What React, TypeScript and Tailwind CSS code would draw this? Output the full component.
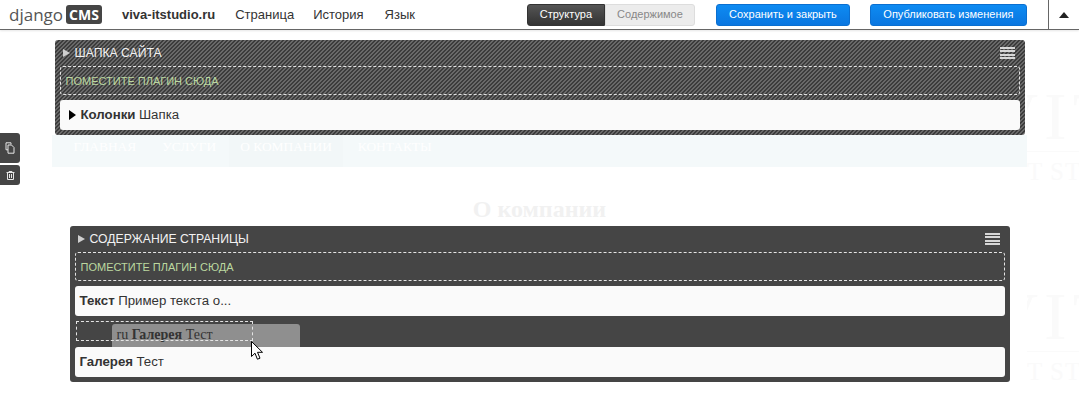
const stripes =
  'bg-[repeating-linear-gradient(135deg,#3c3c3c_0px,#3c3c3c_1.414px,#696969_1.414px,#696969_2.828px)]';

function MenuIcon({ className }: { className: string }) {
  return (
    <div className={`absolute flex h-[12px] w-[15px] flex-col justify-between ${className}`}>
      <span className="h-[2px] bg-[#d6d6d6]" />
      <span className="h-[2px] bg-[#d6d6d6]" />
      <span className="h-[2px] bg-[#d6d6d6]" />
      <span className="h-[2px] bg-[#d6d6d6]" />
    </div>
  );
}

function Header({ title }: { title: string }) {
  return (
    <div className="flex h-[26px] items-center pl-[3px] text-[12.2px] text-[#f2f2f2]">
      <span className="mr-[5px] h-0 w-0 border-y-[4px] border-l-[7px] border-y-transparent border-l-[#cfcfcf]" />
      {title}
    </div>
  );
}

function DropZone() {
  return (
    <div className="flex h-[29px] items-center rounded-[3px] border border-dashed border-[#e4e4e4] pl-[5px] pt-[2px] text-[11px] text-[#bcd9a0]">
      ПОМЕСТИТЕ ПЛАГИН СЮДА
    </div>
  );
}

function Plugin({ name, text, arrow }: { name: string; text: string; arrow?: boolean }) {
  return (
    <div className="flex h-[30px] items-center rounded-[3px] bg-[#fafafa] pl-[5px] text-[13.25px] text-[#333]">
      {arrow && (
        <span className="ml-[4px] mr-[5px] h-0 w-0 border-y-[5px] border-l-[7px] border-y-transparent border-l-black" />
      )}
      <b className="mr-[3.5px] font-bold">{name}</b>
      {text}
    </div>
  );
}

// faint logo of the page underneath, cut by the right edge of the window
function Watermark({ className }: { className: string }) {
  return (
    <div className={`absolute left-[1027px] w-[52px] overflow-hidden font-['Liberation_Serif',serif] leading-none text-[#fafafa] ${className}`}>
      <div className="-ml-[38px] whitespace-nowrap text-[68px] tracking-[6px]">VIT</div>
      <div className="mt-[1px] whitespace-nowrap border-t border-[#fafafa] pt-[7px] text-[25px] tracking-[1px]">T ST</div>
    </div>
  );
}

export default function App() {
  return (
    <div className="relative h-[401px] w-[1079px] overflow-hidden bg-white font-['Liberation_Sans',sans-serif]">
      {/* Toolbar */}
      <header className="flex h-[30px] items-center border-b border-[#666] bg-white text-[13px] text-[#333] shadow-[0_1px_2px_rgba(0,0,0,0.1)]">
        <div className="ml-[9px] flex items-center">
          <span className="font-['Open_Sans',sans-serif] text-[17px] text-[#555]">django</span>
          <span className="ml-[3px] flex h-[19px] w-[36px] items-center justify-center rounded-[3px] bg-[#454545] font-['Open_Sans',sans-serif] text-[14px] font-bold text-white">
            CMS
          </span>
        </div>
        <b className="ml-[20px] font-bold">viva-itstudio.ru</b>
        <span className="ml-[20px]">Страница</span>
        <span className="ml-[19px]">История</span>
        <span className="ml-[21px]">Язык</span>
        <div className="ml-[112px] flex h-[22px] text-[11px]">
          <span className="flex w-[78px] items-center justify-center rounded-l-[3px] border border-[#333] bg-gradient-to-b from-[#555] to-[#333] text-white">
            Структура
          </span>
          <span className="flex w-[90px] items-center justify-center rounded-r-[3px] border border-[#ddd] bg-[#ececec] text-[#888]">
            Содержимое
          </span>
        </div>
        <span className="ml-[21px] flex h-[22px] w-[134px] items-center justify-center rounded-[3px] border border-[#0b6fd0] bg-gradient-to-b from-[#0e8bf2] to-[#0a76e0] text-[11px] text-white">
          Сохранить и закрыть
        </span>
        <span className="ml-[20px] flex h-[22px] w-[157px] items-center justify-center rounded-[3px] border border-[#0b6fd0] bg-gradient-to-b from-[#0e8bf2] to-[#0a76e0] text-[11px] text-white">
          Опубликовать изменения
        </span>
        <div className="ml-[21px] flex h-[29px] flex-1 items-center border-l border-[#666] pl-[10px]">
          <span className="h-0 w-0 border-x-[5px] border-b-[6px] border-x-transparent border-b-[#222]" />
        </div>
      </header>

      {/* Background page watermarks */}
      <Watermark className="top-[82px]" />
      <Watermark className="top-[282px]" />

      {/* Side tools */}
      <div className="absolute left-0 top-[133px] flex w-[20px] flex-col gap-[2px]">
        <div className="flex h-[30px] items-center justify-center rounded-r-[3px] bg-[#454545]">
          <svg width="10" height="12" viewBox="0 0 10 12" fill="none" stroke="#e6e6e6" strokeWidth="1">
            <path d="M6 2.5V0.8H1v7h2" />
            <path d="M3 3h3.5L9 5.5v5.7H3z" />
          </svg>
        </div>
        <div className="flex h-[20px] items-center justify-center rounded-r-[3px] bg-[#454545]">
          <svg width="9" height="9" viewBox="0 0 9 9" fill="none" stroke="#e6e6e6" strokeWidth="1">
            <path d="M0.5 1.5h8M3 1.5V0.5h3v1M1.5 1.5v7h6v-7M3.5 3v4M5.5 3v4" />
          </svg>
        </div>
      </div>

      {/* Page under the structure board */}
      <main className="relative mx-auto mt-[10px] w-[970px]">
        <section className={`relative rounded-[3px] px-[5px] pb-[5px] ${stripes}`}>
          <Header title="ШАПКА САЙТА" />
          <MenuIcon className="right-[10px] top-[7px]" />
          <DropZone />
          <div className="mt-[5px]">
            <Plugin name="Колонки" text="Шапка" arrow />
          </div>
        </section>

        <nav className="-ml-[3px] -mr-[2px] flex h-[32px] bg-[#f4f9fa] pb-[8px] pl-[22px] font-['Liberation_Serif',serif] text-[13.4px] text-white">
          <span className="flex items-center">ГЛАВНАЯ</span>
          <span className="ml-[26px] flex items-center">УСЛУГИ</span>
          <span className="-mb-[8px] ml-[13px] flex items-center bg-[#f2f7f8] px-[11px] pb-[8px]">О КОМПАНИИ</span>
          <span className="ml-[15px] flex items-center">КОНТАКТЫ</span>
        </nav>

        <h1 className="mt-[29px] text-center font-['Liberation_Serif',serif] text-[24px] font-bold leading-[26px] text-[#f1f1f1]">
          О компании
        </h1>

        <section className="relative mx-[15px] mt-[4px] rounded-[3px] bg-[#454545] px-[5px] pb-[5px]">
          <Header title="СОДЕРЖАНИЕ СТРАНИЦЫ" />
          <MenuIcon className="right-[10px] top-[7px]" />
          <DropZone />
          <div className="mt-[5px]">
            <Plugin name="Текст" text="Пример текста о..." />
          </div>

          {/* Plugin being dragged */}
          <div className="absolute left-[42px] top-[98px] flex h-[23px] w-[188px] items-center rounded-t-[3px] bg-[#8f8f8f] pb-[2px] pl-[5px] font-['Liberation_Serif',serif] text-[14px] text-[#333]">
            ru&nbsp;<b className="font-bold">Галерея</b>&nbsp;Тест
          </div>

          <div className="relative ml-[1px] mt-[5px] h-[20px] w-[177px] border border-dashed border-[#e4e4e4]" />
          <div className="relative mt-[6px]">
            <Plugin name="Галерея" text="Тест" />
          </div>

          <svg className="absolute left-[181px] top-[115px]" width="13" height="19" viewBox="0 0 13 19">
            <path
              d="M0.5 0.5v15l3.5-3.3 2.4 6 2.6-1-2.5-5.9h5z"
              fill="#fff"
              stroke="#000"
              strokeWidth="1"
            />
          </svg>
        </section>
      </main>
    </div>
  );
}
